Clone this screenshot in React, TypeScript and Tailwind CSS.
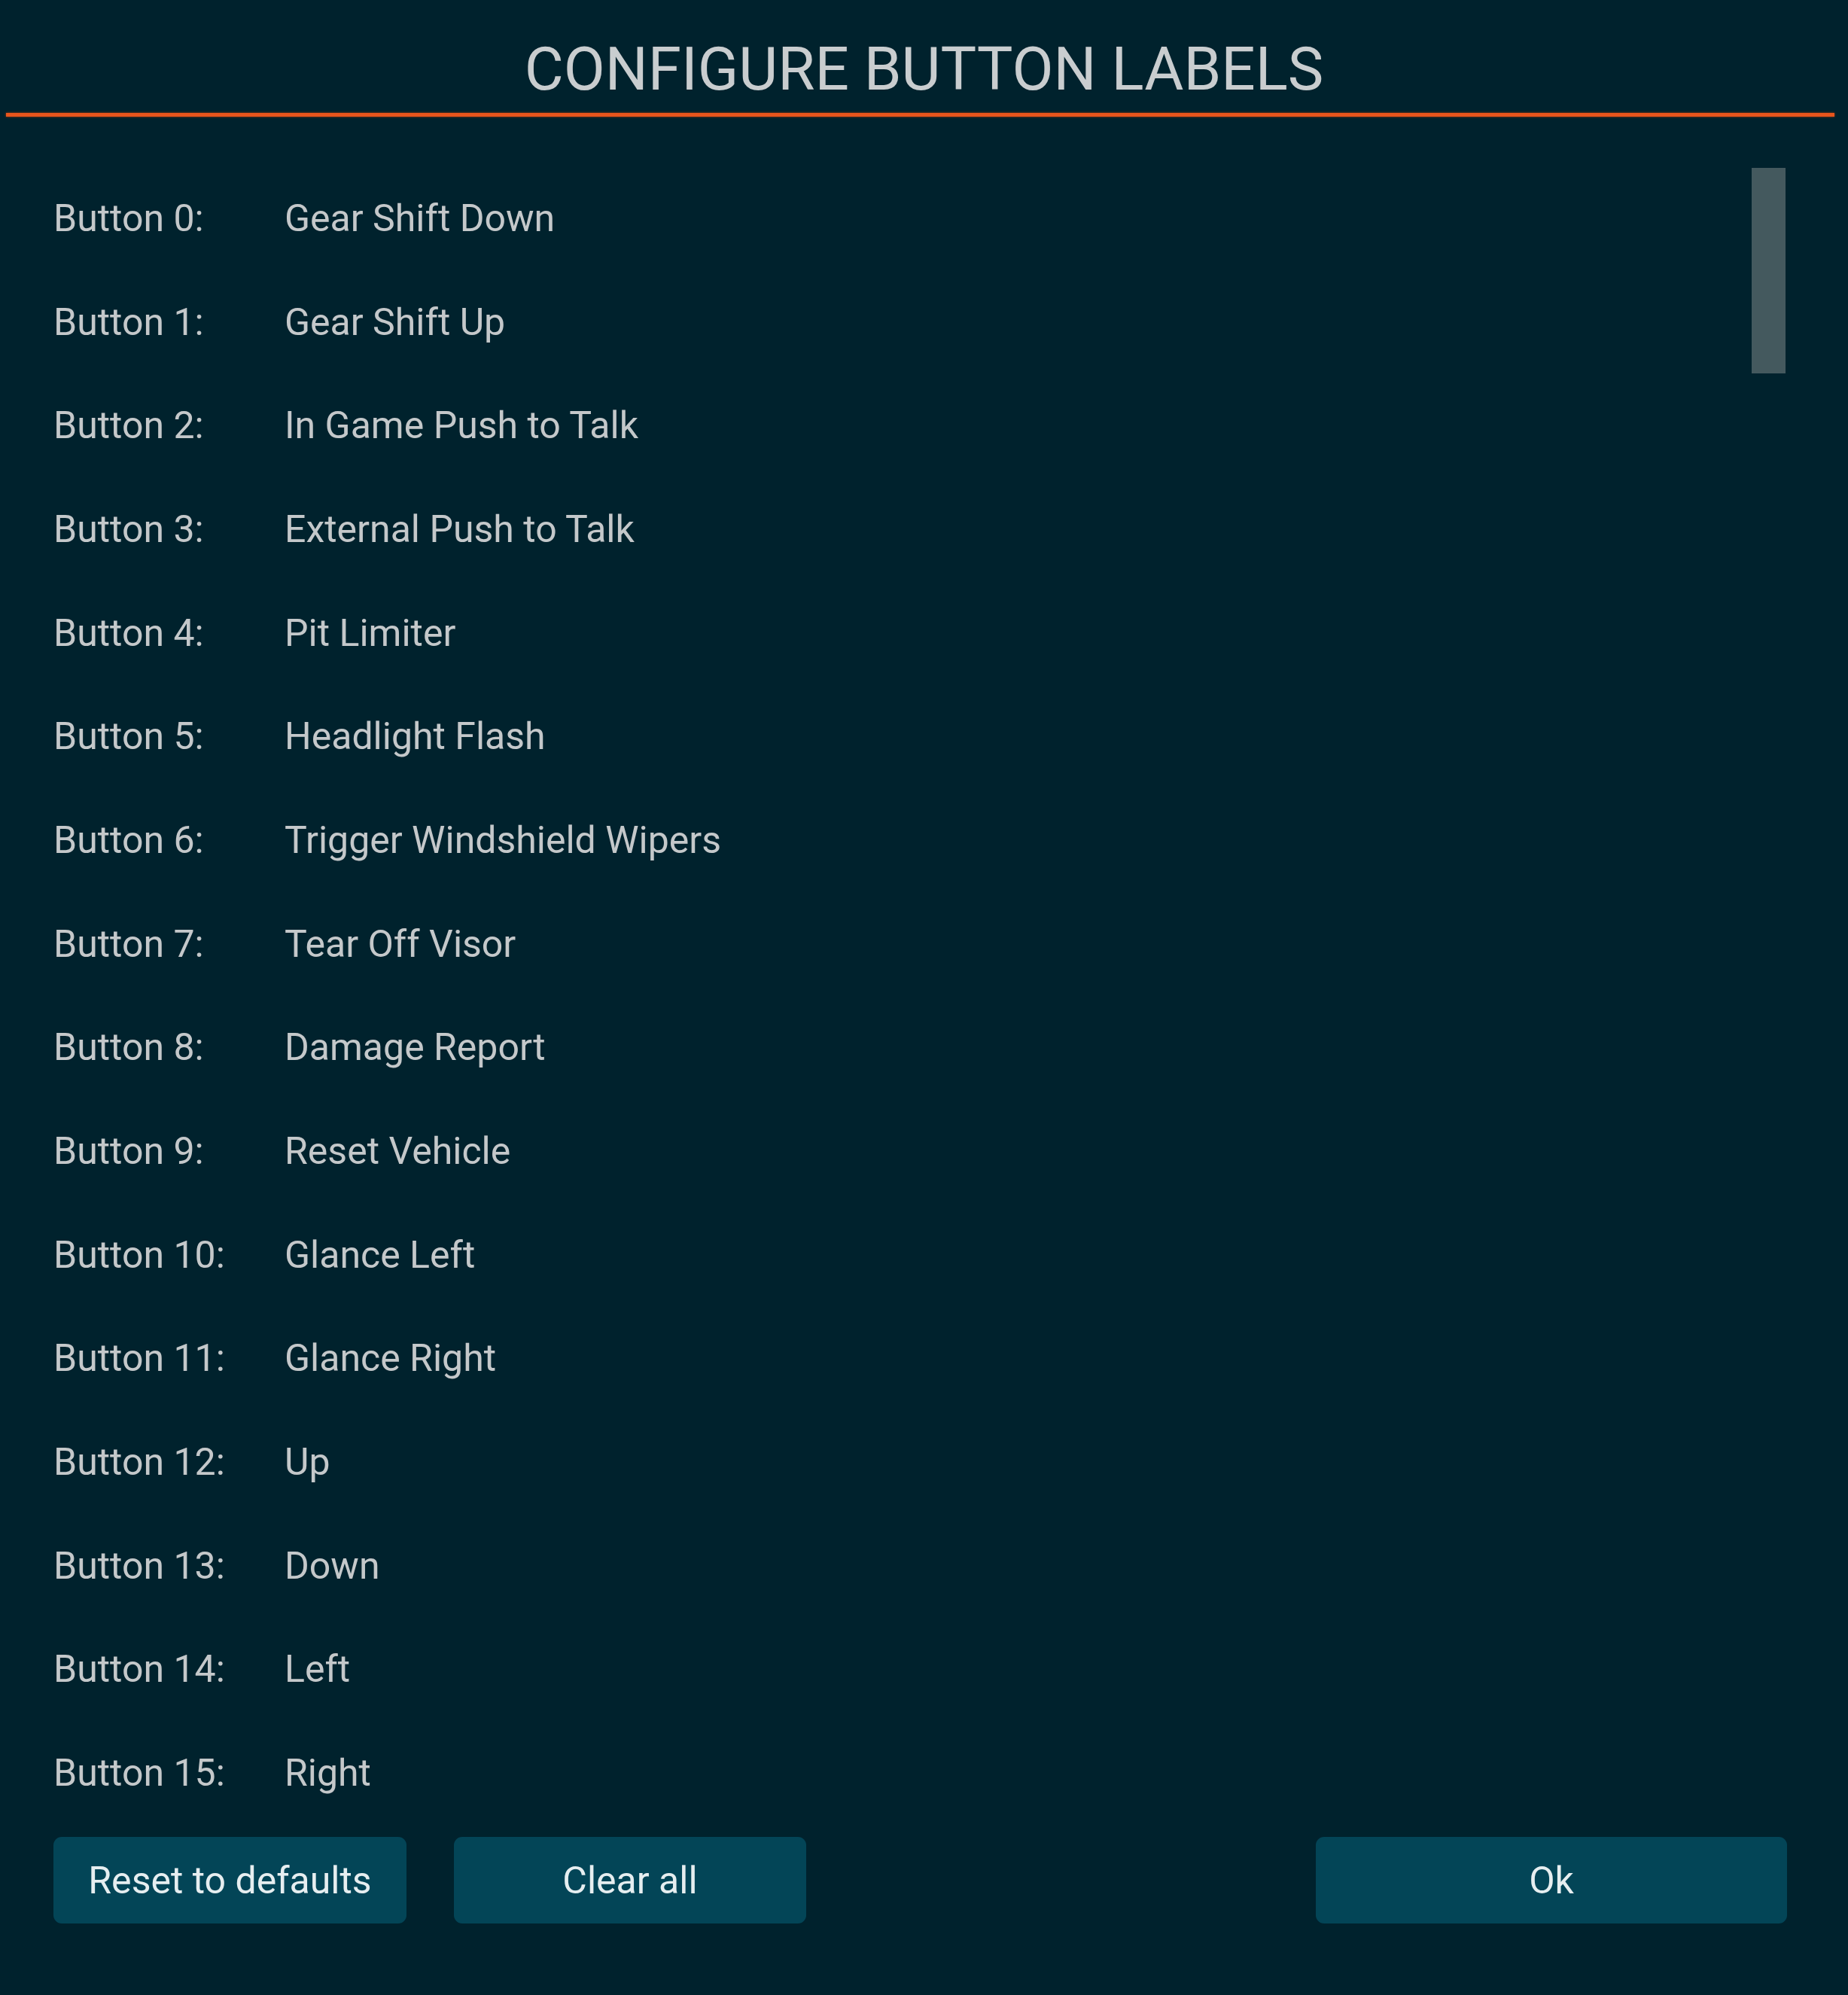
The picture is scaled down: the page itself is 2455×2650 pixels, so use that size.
const ROWS = [
  "Gear Shift Down",
  "Gear Shift Up",
  "In Game Push to Talk",
  "External Push to Talk",
  "Pit Limiter",
  "Headlight Flash",
  "Trigger Windshield Wipers",
  "Tear Off Visor",
  "Damage Report",
  "Reset Vehicle",
  "Glance Left",
  "Glance Right",
  "Up",
  "Down",
  "Left",
  "Right",
];

export default function App() {
  return (
    <div
      className="w-[2455px] h-[2650px] bg-[#00222d] flex flex-col overflow-hidden"
      style={{ fontFamily: "Roboto, 'Noto Sans', sans-serif" }}
    >
      {/* header */}
      <div className="pt-[52px] text-center text-[80px] leading-none text-[#c9cdcf]">
        CONFIGURE BUTTON LABELS
      </div>
      <div className="mt-[18px] ml-[8px] mr-[18px] h-[5px] bg-[#e8551c] shadow-[0_0_3px_#a83a10]" />

      {/* list */}
      <div className="relative mt-[66px] pl-[71px] pr-[81px] h-[2203px] overflow-hidden">
        <div className="flex flex-col">
          {ROWS.map((label, i) => (
            <div key={i} className="h-[137.7px] flex items-center text-[50px] leading-none text-[#c4c8ca]">
              <span className="w-[307px] shrink-0">Button {i}:</span>
              <span>{label}</span>
            </div>
          ))}
        </div>
        <div className="absolute right-[83px] top-[2px] w-[45px] h-[273px] bg-[#44595e]" />
      </div>

      {/* footer */}
      <div className="mt-[16px] pl-[71px] pr-[81px] flex gap-[63px]">
        <button className="w-[469px] h-[115px] rounded-[11px] bg-[#034557] text-[50px] leading-none text-[#e6eef0]">
          Reset to defaults
        </button>
        <button className="w-[468px] h-[115px] rounded-[11px] bg-[#034557] text-[50px] leading-none text-[#e6eef0]">
          Clear all
        </button>
        <button className="ml-auto w-[626px] h-[115px] rounded-[11px] bg-[#034557] text-[50px] leading-none text-[#e6eef0]">
          Ok
        </button>
      </div>
    </div>
  );
}
